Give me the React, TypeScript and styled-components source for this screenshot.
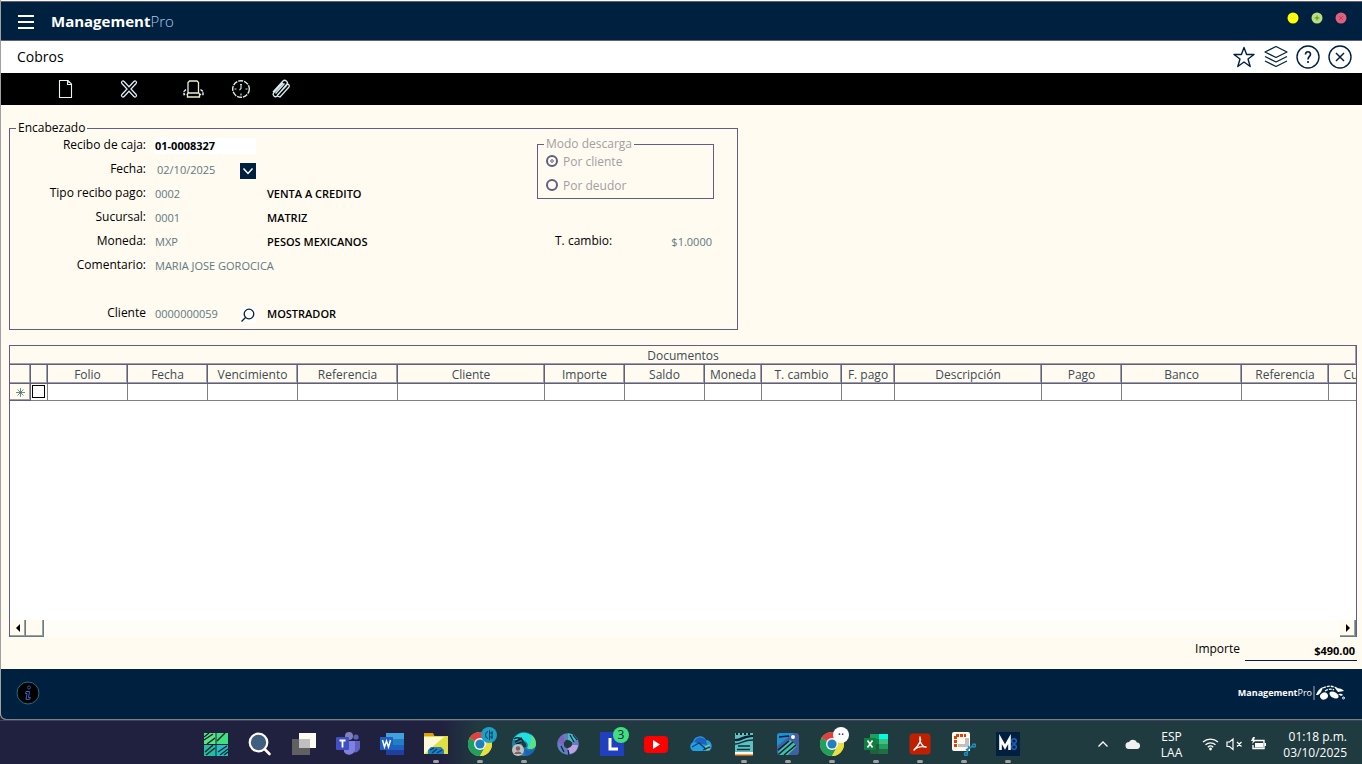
import React from "react";
import styled, { createGlobalStyle, css } from "styled-components";

const navy = "#00203f";
const cream = "#fffbf0";
const line = "#5f5f80";
const sans = '"Open Sans", "Noto Sans", sans-serif';

const Global = createGlobalStyle`
  *, *::before, *::after { box-sizing: border-box; }
  body { margin: 0; background: #20203f; font-family: ${sans}; font-size: 12px; color: #000; }
  button, input { font-family: inherit; }
`;

const Screen = styled.div`
  min-height: 100vh;
  display: flex;
  flex-direction: column;
`;

const AppWindow = styled.div`
  flex: 1;
  display: flex;
  flex-direction: column;
  border-left: 1px solid #a0a0a4;
  border-bottom: 1px solid #808080;
  border-bottom-left-radius: 6px;
  background: ${cream};
  overflow: hidden;
`;

const AppBar = styled.header`
  height: 40px;
  margin-top: 1px;
  display: flex;
  align-items: center;
  padding: 0 15px 0 17px;
  background: ${navy};
  border-top: 1px solid ${line};
  border-bottom: 1px solid ${line};
`;

const IconButton = styled.button<{ $w?: number; $h?: number; $bg?: string }>`
  width: ${(p) => p.$w ?? 24}px;
  height: ${(p) => p.$h ?? 24}px;
  padding: 0;
  border: 0;
  background: ${(p) => p.$bg ?? "transparent"};
  display: flex;
  align-items: center;
  justify-content: center;
  flex: none;
`;

const Brand = styled.div<{ $small?: boolean }>`
  color: #fff;
  font-weight: 700;
  ${(p) => (p.$small ? css`font-size: 9px; line-height: 14px;` : css`font-size: 15px; line-height: 20px; margin-left: 17px;`)}
  span { font-weight: ${(p) => (p.$small ? 400 : 300)}; color: ${(p) => (p.$small ? "#fff" : "#a6caf0")}; }
`;

const WindowButtons = styled.div`
  margin-left: auto;
  display: flex;
  gap: 12px;
  padding-bottom: 6px;
`;

const TitleBar = styled.div`
  height: 32px;
  display: flex;
  align-items: center;
  justify-content: space-between;
  padding: 0 10px 0 16px;
  background: #fff;
`;

const Title = styled.h1`
  margin: 0;
  font-size: 14px;
  line-height: 20px;
  font-weight: 400;
`;

const TitleActions = styled.div`
  display: flex;
  gap: 8px;
`;

const Toolbar = styled.div`
  height: 32px;
  display: flex;
  align-items: center;
  padding-left: 52px;
  background: #000;
`;

const ToolGroup = styled.div<{ $gap: number; $after?: number }>`
  display: flex;
  gap: ${(p) => p.$gap}px;
  margin-right: ${(p) => p.$after ?? 0}px;
`;

const Main = styled.main`
  flex: 1;
  display: flex;
  flex-direction: column;
  padding: 17px 5px 8px 8px;
`;

const HeaderBox = styled.fieldset`
  width: 729px;
  max-width: 100%;
  margin: 0 0 15px;
  padding: 0 0 3px;
  border: 1px solid ${line};
  display: grid;
  grid-template-columns: 527px 177px;
`;

const Legend = styled.legend<{ $muted?: boolean }>`
  margin-left: ${(p) => (p.$muted ? -2 : 6)}px;
  padding: 0 2px;
  line-height: 12px;
  color: ${(p) => (p.$muted ? "#a0a0a4" : "#000")};
`;

const Fields = styled.div`
  display: flex;
  flex-direction: column;
`;

const Row = styled.div<{ $spaced?: boolean }>`
  height: 24px;
  display: grid;
  grid-template-columns: 136px 102px auto;
  align-items: center;
  margin-top: ${(p) => (p.$spaced ? 24 : 0)}px;
`;

const Label = styled.label`
  text-align: right;
  line-height: 20px;
  padding-bottom: 2px;
  white-space: nowrap;
`;

const ValueCell = styled.div`
  margin-left: 8px;
  width: 102px;
  display: flex;
  align-items: center;
  button { margin-top: 2px; }
`;

const Value = styled.input<{ $tone?: "white" | "date" | "plain"; $wide?: boolean }>`
  height: 16px;
  flex: none;
  width: ${(p) => (p.$tone === "white" ? 102 : p.$wide ? 240 : 86)}px;
  padding: 0 0 0 ${(p) => (p.$tone === "date" ? 3 : 1)}px;
  border: 0;
  font-size: 11px;
  line-height: 16px;
  font-weight: ${(p) => (p.$tone === "white" ? 700 : p.$tone === "date" ? 400 : 500)};
  color: ${(p) => (p.$tone === "white" ? "#000" : "#607880")};
  background: ${(p) => (p.$tone === "white" ? "#fff" : "transparent")};
`;

const Description = styled.output`
  margin-left: 19px;
  font-size: 11px;
  line-height: 16px;
  font-weight: 600;
  white-space: nowrap;
`;

const Side = styled.div`
  padding-top: 4px;
`;

const ModeBox = styled.fieldset`
  margin: 0;
  padding: 0 0 0 8px;
  border: 1px solid ${line};
`;

const RadioRow = styled.label`
  height: 24px;
  display: flex;
  align-items: center;
  gap: 5px;
  padding-bottom: 2px;
  color: #a0a0a4;
`;

const Radio = styled.input`
  appearance: none;
  width: 12px;
  height: 12px;
  margin: 0;
  border: 2px solid ${line};
  border-radius: 50%;
  &:checked { background: radial-gradient(circle, #a0a0a4 2px, transparent 2px); }
`;

const RateRow = styled.div`
  height: 24px;
  margin-top: 31px;
  padding-left: 18px;
  display: flex;
  align-items: center;
  justify-content: space-between;
  input { width: 80px; text-align: right; padding-right: 2px; }
`;

const Grid = styled.section`
  flex: 1;
  display: flex;
  flex-direction: column;
  border: 1px solid ${line};
  border-bottom: 0;
  background: #fff;
  overflow: hidden;
`;

const GridTitle = styled.h2`
  margin: 0;
  height: 19px;
  font-size: 12px;
  line-height: 19px;
  font-weight: 400;
  text-align: center;
  color: #404a55;
  background: ${cream};
  border-bottom: 1px solid ${line};
  box-shadow: inset -1px -1px #a0a0a4;
`;

const Table = styled.table`
  table-layout: fixed;
  width: 1389px;
  border-collapse: separate;
  border-spacing: 0;
`;

const Th = styled.th`
  height: 19px;
  padding: 1px 0 0;
  font-weight: 400;
  line-height: 16px;
  color: #404a55;
  white-space: nowrap;
  background: ${cream};
  border-right: 1px solid ${line};
  border-bottom: 1px solid ${line};
  box-shadow: inset -1px -1px #a0a0a4;
`;

const Td = styled.td<{ $head?: boolean }>`
  height: 17px;
  padding: 0;
  line-height: 0;
  border-right: 1px solid #808080;
  border-bottom: 1px solid #808080;
  ${(p) => p.$head && css`background: ${cream}; border-color: ${line}; text-align: center; box-shadow: inset -1px -1px #a0a0a4;`}
`;

const Check = styled.input`
  appearance: none;
  display: block;
  width: 13px;
  height: 13px;
  margin: 0 0 1px 1px;
  border: 1px solid #000;
  background: #fff;
`;

const ScrollBar = styled.div`
  margin-top: auto;
  height: 17px;
  display: flex;
  background: #fffdf8;
`;

const ScrollButton = styled.button<{ $end?: boolean }>`
  width: 16px;
  height: 17px;
  padding: 0;
  margin-left: ${(p) => (p.$end ? "auto" : 0)};
  display: flex;
  align-items: center;
  justify-content: center;
  background: ${cream};
  border: 0;
  border-right: 1px solid #607f80;
  border-bottom: 1px solid #607f80;
  box-shadow: inset -1px -1px #a0a0a4;
  & + &:not(:last-child) { width: 18px; }
`;

const Total = styled.div`
  display: flex;
  justify-content: flex-end;
  height: 24px;
  gap: 5px;
  label { line-height: 23px; }
  input {
    width: 112px;
    height: 24px;
    padding: 3px 2px 0 0;
    border: 0;
    border-bottom: 1px solid ${navy};
    background: transparent;
    text-align: right;
    font-size: 11px;
    font-weight: 700;
  }
`;

const Footer = styled.footer`
  height: 50px;
  display: flex;
  align-items: center;
  justify-content: space-between;
  padding: 0 16px 2px 15px;
  background: ${navy};
`;

const FooterBrand = styled.div`
  display: flex;
  align-items: center;
  gap: 1px;
`;

const Taskbar = styled.nav`
  height: 44px;
  display: flex;
  align-items: center;
  padding: 0 15px 0 194px;
  border-top: 1px solid #404060;
  background: linear-gradient(90deg, #20203f 440px, #203b40 480px);
  color: #fff;
`;

const TaskButton = styled.button<{ $open?: boolean }>`
  position: relative;
  width: 44px;
  height: 43px;
  padding: 3px 0 0;
  border: 0;
  background: none;
  display: flex;
  align-items: center;
  justify-content: center;
  flex: none;
  ${(p) => p.$open && css`
    &::after {
      content: "";
      position: absolute;
      left: 19px;
      bottom: 1px;
      width: 6px;
      height: 3px;
      border-radius: 2px;
      background: #a0a0a4;
    }
  `}
`;

const Badge = styled.span<{ $bg: string }>`
  position: absolute;
  right: 5px;
  top: 6px;
  width: 16px;
  height: 16px;
  border-radius: 50%;
  background: ${(p) => p.$bg};
  color: #00203f;
  font-size: 12px;
  line-height: 16px;
  text-align: center;
`;

const Tray = styled.div`
  margin-left: auto;
  display: flex;
  align-items: center;
`;

const TrayIcons = styled.div`
  display: flex;
  align-items: center;
  gap: 7px;
  margin: 3px 16px 0 20px;
`;

const TrayLead = styled.div`
  display: flex;
  align-items: center;
  gap: 16px;
  margin: 3px 20px 0 0;
`;

const TrayText = styled.div<{ $right?: boolean }>`
  margin-top: 4px;
  font-size: 12px;
  line-height: 16px;
  text-align: ${(p) => (p.$right ? "right" : "center")};
`;

const columns: [string, number][] = [
  ["", 21], ["", 17], ["Folio", 80], ["Fecha", 80], ["Vencimiento", 90], ["Referencia", 100],
  ["Cliente", 147], ["Importe", 80], ["Saldo", 80], ["Moneda", 57], ["T. cambio", 80],
  ["F. pago", 53], ["Descripción", 147], ["Pago", 80], ["Banco", 120], ["Referencia", 87], ["Cuenta", 70],
];

const Svg = ({ s = 24, h, vb, children }: { s?: number; h?: number; vb?: string; children: React.ReactNode }) => (
  <svg width={s} height={h ?? s} viewBox={vb ?? `0 0 ${s} ${h ?? s}`} fill="none" aria-hidden="true">{children}</svg>
);

const Chrome = () => (
  <Svg>
    <circle cx="12" cy="12" r="12" fill="#e8e040" />
    <path d="M12 12 1.6 6A12 12 0 0 1 22.4 6Z" fill="#e04040" />
    <path d="M12 12 1.6 6A12 12 0 0 0 12 24l5-9Z" fill="#209f60" />
    <path d="M12 6h10.4A12 12 0 0 1 12 24l5-9Z" fill="#e8e040" />
    <circle cx="12" cy="12" r="6" fill="#fffbf0" />
    <circle cx="12" cy="12" r="4.6" fill="#2080c0" />
  </Svg>
);

const tasks: { name: string; open?: boolean; badge?: [string, React.ReactNode]; icon: React.ReactNode }[] = [
  { name: "Inicio", icon: <Svg><path d="M0 1h11.500v11H0z" fill="#60e080" /><path d="M12.500 1H24v11H12.500z" fill="#40e080" /><path d="M0 13h11.500v11H0z" fill="#20bfa0" /><path d="M12.500 13H24v11H12.500z" fill="#20bfc0" /><path d="M0 5 5 1M0 8 9 2M3 12l8-6M13 9l8-8M14 20l9-6M16 23l8-6M1 20l8-7M2 23l9-7M20 23l4-3" stroke="#00202f" strokeWidth="1.300" /></Svg> },
  { name: "Buscar", icon: <Svg><circle cx="10.500" cy="10.500" r="8.800" fill="#405f80" stroke="#fffbf0" strokeWidth="2.200" /><path d="m17 17.500 4.500 4.500" stroke="#fffbf0" strokeWidth="2.600" strokeLinecap="round" /></Svg> },
  { name: "Vista de tareas", icon: <Svg><path d="M0 7h18v16H0z" fill="#606060" /><path d="M7 1h17v15H7z" fill="#fffbf0" /><path d="M7 7h11v9H7z" fill="#c0c0c0" /></Svg> },
  { name: "Teams", icon: <Svg><circle cx="13" cy="4" r="4" fill="#8080c0" /><circle cx="20" cy="5" r="2.600" fill="#6060c0" /><path d="M16 9h8v7a5 5 0 0 1-7 4Z" fill="#6060c0" /><path d="M8 9h11v8a6 6 0 0 1-11 3Z" fill="#8080e0" /><rect y="5" width="13" height="13" rx="1" fill="#4050c0" /><path d="M3.500 8.500h6M6.500 8.500v7" stroke="#fff" strokeWidth="1.800" /></Svg> },
  { name: "Word", icon: <Svg><path d="M6 1h18v6H6z" fill="#40a0e0" /><path d="M6 7h18v6H6z" fill="#2080c0" /><path d="M6 13h18v5H6z" fill="#2060c0" /><path d="M6 18h18v5H6z" fill="#2040a0" /><rect y="5" width="13" height="13" fill="#2060c0" /><path d="m2.500 8 2 7 2-6 2 6 2-7" stroke="#fff" strokeWidth="1.500" /></Svg> },
  { name: "Explorador", open: true, icon: <Svg><path d="M0 1h9l2 4H0z" fill="#e0a000" /><path d="M0 4h24v18H0z" fill="#e0e040" /><path d="M0 5h20L0 22Z" fill="#fff8d8" /><path d="M4 22v-4l3-3h10l3 3v4z" fill="#2080c0" /><path d="m6 18 4-2M8 21l5-4M13 21l5-3" stroke="#003f60" strokeWidth="1.300" /></Svg> },
  { name: "Chrome", open: true, badge: ["#20a0c0", <Svg s={16} key="b"><path d="M7 4.500Q4.500 5 4.500 8t2.500 3.500M8.500 3v10M11 4v8M8 6h4M8 10h4" stroke="#00406f" /></Svg>], icon: <Chrome /> },
  { name: "Edge", open: true, icon: <Svg><circle cx="12" cy="12" r="12" fill="#2080a0" /><path d="M1 8a12 12 0 0 1 23 4c0 5-6 6-9 4 3-4-2-9-8-8Z" fill="#20e0e0" /><path d="M19 2.500a12 12 0 0 1 5 9.500c0 4-5 6-9 4 3-1 5-6 4-13.500Z" fill="#60e080" /><path d="M2 7c4-3 9 0 9 3l-7 2M3 10l7-4" stroke="#00202f" strokeWidth="1.500" /><path d="M9 10c4-1 6 2 5 5l-3 1z" fill="#203b40" /><path d="M11 16c3 3 8 3 12 1a12 12 0 0 1-9 7Z" fill="#2060c0" /><circle cx="6" cy="18" r="6" fill="#c0c0c0" /><circle cx="6" cy="16.500" r="2.200" fill="#806060" /><path d="M2 22a4.500 4.500 0 0 1 8 0" fill="#806060" /></Svg> },
  { name: "Copilot", icon: <Svg><circle cx="12" cy="12" r="7.500" stroke="#6080c0" strokeWidth="6.500" /><path d="M12 1.500a10.500 10.500 0 0 1 9 6l-6 2.500-3-2z" fill="#40c0c0" /><path d="M22 13a10.500 10.500 0 0 1-8 9l-2-6 4-3z" fill="#c0a0e0" /><path d="M2 10a10.500 10.500 0 0 1 5-7l2 6-2 4z" fill="#8060c0" /><path d="m14 3 4 7M17 3l4 5M5 14l3 6M12 18l1 5" stroke="#102040" strokeWidth="1.200" /><circle cx="12" cy="12" r="3.800" fill="#203b40" /></Svg> },
  { name: "L", badge: ["#40e080", "3"], icon: <Svg><path d="M0 0h24v24H0z" fill="#2040c0" /><path d="M10 6v11h8" stroke="#fff" strokeWidth="3" /></Svg> },
  { name: "YouTube", icon: <Svg><rect y="4" width="24" height="17" rx="4" fill="#f00" /><path d="m9 8 7 4.500L9 17z" fill="#fff" /></Svg> },
  { name: "OneDrive", icon: <Svg><path d="M5 19a5 5 0 0 1 0-9 7 7 0 0 1 13-2 6 6 0 0 1 3 11Z" fill="#20a0e0" /><path d="M6 10a7 7 0 0 1 12-2l1 5-6-1z" fill="#2060c0" /><path d="m4 15 7-4 8 7M15 18l7-3" stroke="#003f60" strokeWidth="1.200" /><path d="m17 15 5-2M18 18l4-1" stroke="#e0c040" /></Svg> },
  { name: "Bloc de notas", open: true, icon: <Svg><path d="M3 1h18v20H3z" fill="#60c0c0" /><path d="M3 20h18v3H3z" fill="#fffbf0" /><path d="M3 22.500h18V24H3z" fill="#c06000" /><path d="M3 7c5 0 8-4 18-4v2C13 5 9 10 3 9Z" fill="#00202f" /><path d="M3 12c6 0 8-4 18-4M6 14h12M5 17.500h13" stroke="#00303f" strokeWidth="1.500" /><path d="M5 1v2M9 1v2M13 1v2M17 1v2" stroke="#00202f" strokeWidth="2" /></Svg> },
  { name: "Fotos", open: true, icon: <Svg><rect x="1" y="1" width="22" height="22" rx="3" fill="#4060a0" /><path d="M1 4q0-3 3-3h14L1 14z" fill="#2090d0" /><path d="M2 20 14 8l7 6-9 9H4z" fill="#40c0a0" /><path d="m2 18 11-9M3 22l14-12M8 23l12-10M3 5l10-1" stroke="#00203f" strokeWidth="1.600" /><circle cx="17" cy="5" r="2" fill="#fff" /></Svg> },
  { name: "Chrome 2", open: true, badge: ["#fff", "··"], icon: <Chrome /> },
  { name: "Excel", open: true, icon: <Svg><path d="M6 2h9v5H6z" fill="#20a060" /><path d="M15 2h9v5h-9z" fill="#00ffe0" /><path d="M6 7h9v5H6z" fill="#108050" /><path d="M15 7h9v5h-9z" fill="#40c080" /><path d="M6 12h9v10H6z" fill="#205f40" /><path d="M15 12h9v5h-9z" fill="#209f60" /><path d="M15 17h9v5h-9z" fill="#206f40" /><path d="M0 6h12v12H0z" fill="#108040" /><path d="m3.500 8.500 5 7M8.500 8.500l-5 7" stroke="#fff" strokeWidth="1.700" /></Svg> },
  { name: "Acrobat", open: true, icon: <Svg><rect x="1.500" y="1.500" width="21" height="21" rx="3.500" fill="#c02000" /><path d="M12 5c2 4-2 9-6 13 3-3 7-4 12-3-4 0-7-6-6-10Z" stroke="#fff" strokeWidth="1.400" strokeLinejoin="round" /></Svg> },
  { name: "Recortes", open: true, icon: <Svg><path d="M2 0h14q2 0 2 2v17H2q-2 0-2-2V2q0-2 2-2" fill="#fffbf0" /><path d="M3.500 15V3.500H14" stroke="#e04000" strokeWidth="3" strokeDasharray="3 1" /><path d="M6 12h7V6h4v9H6z" fill="#c0c0c0" /><path d="m14 18 7-4M17 14l-2 7" stroke="#208fc0" strokeWidth="1.500" /><circle cx="22" cy="13.500" r="1.500" stroke="#208fc0" strokeWidth="1.500" /><circle cx="14" cy="22" r="1.500" stroke="#208fc0" strokeWidth="1.500" /></Svg> },
  { name: "ManagementPro", open: true, icon: <Svg><path d="M0 0h24v24H0z" fill={navy} /><path d="M4.500 18V7L9 15l4.500-8v11" stroke="#fff" strokeWidth="2.600" /><circle cx="18" cy="9" r="2.300" stroke="#2060c0" strokeWidth="1.500" /><circle cx="18" cy="15" r="2.300" stroke="#2060c0" strokeWidth="1.500" /></Svg> },
];

const Field = ({ id, label, children, text, spaced }: { id: string; label: string; children: React.ReactNode; text?: string; spaced?: boolean }) => (
  <Row $spaced={spaced}>
    <Label htmlFor={id}>{label}</Label>
    <ValueCell>{children}</ValueCell>
    {text && <Description htmlFor={id}>{text}</Description>}
  </Row>
);

export default function App() {
  return (
    <Screen>
      <Global />
      <AppWindow>
        <AppBar>
          <IconButton $w={16} aria-label="Menú"><Svg s={16}><path d="M0 3h16M0 9h16M0 15h16" stroke="#fff" strokeWidth="2" /></Svg></IconButton>
          <Brand>Management<span>Pro</span></Brand>
          <WindowButtons>
            <IconButton $w={12} $h={12} aria-label="Minimizar"><Svg s={12}><circle cx="6" cy="6" r="5.500" fill="#ff0" /><path d="M3.500 6h5" stroke="#e0e080" /></Svg></IconButton>
            <IconButton $w={12} $h={12} aria-label="Maximizar"><Svg s={12}><circle cx="6" cy="6" r="5.500" fill="#c0dc80" /><path d="M3.500 6h5M6 3.500v5" stroke="#409f20" /></Svg></IconButton>
            <IconButton $w={12} $h={12} aria-label="Cerrar"><Svg s={12}><circle cx="6" cy="6" r="5.500" fill="#e06080" /><path d="m4 4 4 4M8 4 4 8" stroke="#c04060" /></Svg></IconButton>
          </WindowButtons>
        </AppBar>
        <TitleBar>
          <Title>Cobros</Title>
          <TitleActions>
            <IconButton aria-label="Favorito"><Svg><path d="m12 2.500 2.600 7h7.400l-6 4.500 2.200 7.500L12 17l-6.200 4.500L8 14 2 9.500h7.400Z" stroke={navy} strokeWidth="1.400" strokeLinejoin="round" /></Svg></IconButton>
            <IconButton aria-label="Ventanas"><Svg><path d="M12 1.500 23 7l-11 5.500L1 7ZM1 11.500l11 5.500 11-5.500M1 16l11 5.500L23 16" stroke={navy} strokeWidth="1.200" strokeLinejoin="round" /></Svg></IconButton>
            <IconButton aria-label="Ayuda"><Svg><circle cx="12" cy="12" r="11" stroke={navy} strokeWidth="1.400" /><path d="M9.500 9.500c0-3.600 5-3.600 5 0 0 2-2.500 2-2.500 5M12 16v2" stroke={navy} strokeWidth="1.600" /></Svg></IconButton>
            <IconButton aria-label="Cerrar ventana"><Svg><circle cx="12" cy="12" r="11" stroke={navy} strokeWidth="1.400" /><path d="m8 8 8 8M16 8l-8 8" stroke={navy} strokeWidth="1.500" /></Svg></IconButton>
          </TitleActions>
        </TitleBar>
        <Toolbar>
          <ToolGroup $gap={40} $after={24}>
            <IconButton aria-label="Nuevo"><Svg><path d="M6.500 3.500H15l3.500 3.500v13.500h-12ZM14.500 4v4M14.500 4.500l3 1.500M14.500 7.500h4" stroke="#e8f4f0" strokeWidth="1.100" /></Svg></IconButton>
            <IconButton aria-label="Cancelar"><Svg><path d="m6 5.500 12 13M18 5.500l-12 13" stroke="#e0f0ff" strokeWidth="4.200" strokeLinecap="round" /><path d="m6 5.500 12 13M18 5.500l-12 13" stroke="#000" strokeWidth="1.800" strokeLinecap="round" /></Svg></IconButton>
            <IconButton aria-label="Imprimir"><Svg><path d="M7 15.500V5.500L8.500 4h7.500l1.500 1.500v10M7 15.500l-.500 1.500v3h12v-3l-1-1.500M7 16h10.500" stroke="#e8f0d0" strokeWidth="1.300" /><path d="M5 12.500 3 14.500v3h2.500M19.500 12.500l2.500 2v3h-3" stroke="#e0f0ff" strokeWidth="1.400" strokeDasharray="3 1" /></Svg></IconButton>
          </ToolGroup>
          <ToolGroup $gap={16}>
            <IconButton aria-label="Historial"><Svg><circle cx="12" cy="12" r="8.300" stroke="#e0f0e8" strokeWidth="1.400" strokeDasharray="5 1" /><path d="M12 7v4.500l-1.500 1.500M11 7.500h2M12 16.500v2M5.500 12h2M16.500 12h2" stroke="#c0e0e0" strokeWidth="1.200" /></Svg></IconButton>
            <IconButton aria-label="Adjuntar"><Svg><path d="m4 15 10-11c2-2 5.500 1 4 3L8 19c-2 2-5-1-3.500-3L14 6M8 19l3 1 9-10c1-1.500-.500-3-2-3M6.500 16.500l9-10M8.500 18 18 8" stroke="#d8ecf0" strokeWidth="1.300" /></Svg></IconButton>
          </ToolGroup>
        </Toolbar>
        <Main>
          <HeaderBox>
            <Legend>Encabezado</Legend>
            <Fields>
              <Field id="recibo" label="Recibo de caja:"><Value id="recibo" $tone="white" defaultValue="01-0008327" /></Field>
              <Field id="fecha" label="Fecha:">
                <Value id="fecha" $tone="date" defaultValue="02/10/2025" />
                <IconButton $w={16} $h={16} $bg={navy} aria-label="Elegir fecha"><Svg s={16}><path d="m3.500 5.500 4.500 5 4.500-5" stroke="#fff" strokeWidth="1.500" /></Svg></IconButton>
              </Field>
              <Field id="tipo" label="Tipo recibo pago:" text="VENTA A CREDITO"><Value id="tipo" defaultValue="0002" /></Field>
              <Field id="sucursal" label="Sucursal:" text="MATRIZ"><Value id="sucursal" defaultValue="0001" /></Field>
              <Field id="moneda" label="Moneda:" text="PESOS MEXICANOS"><Value id="moneda" defaultValue="MXP" /></Field>
              <Field id="comentario" label="Comentario:"><Value id="comentario" $wide defaultValue="MARIA JOSE GOROCICA" /></Field>
              <Field id="cliente" label="Cliente" text="MOSTRADOR" spaced>
                <Value id="cliente" defaultValue="0000000059" />
                <IconButton $w={16} $h={16} $bg="#fff" aria-label="Buscar cliente"><Svg s={16}><circle cx="9" cy="7" r="4.800" stroke={navy} strokeWidth="1.300" /><path d="m5.500 10.500-4 4" stroke={navy} strokeWidth="1.300" /></Svg></IconButton>
              </Field>
            </Fields>
            <Side>
              <ModeBox>
                <Legend $muted>Modo descarga</Legend>
                <RadioRow><Radio type="radio" name="modo" defaultChecked disabled />Por cliente</RadioRow>
                <RadioRow><Radio type="radio" name="modo" disabled />Por deudor</RadioRow>
              </ModeBox>
              <RateRow><Label htmlFor="cambio">T. cambio:</Label><Value id="cambio" defaultValue="$1.0000" /></RateRow>
            </Side>
          </HeaderBox>
          <Grid>
            <GridTitle>Documentos</GridTitle>
            <Table>
              <colgroup>{columns.map(([, w], i) => <col key={i} width={w} />)}</colgroup>
              <thead><tr>{columns.map(([name], i) => <Th key={i}>{name}</Th>)}</tr></thead>
              <tbody>
                <tr>
                  {columns.map((_, i) => (
                    <Td key={i} $head={i === 0}>
                      {i === 0 && <Svg s={11}><path d="M5.500 1v9M1 5.500h9M2.500 2.500l6 6M8.500 2.500l-6 6" stroke="#407070" strokeWidth=".8" /></Svg>}
                      {i === 1 && <Check type="checkbox" aria-label="Seleccionar documento" />}
                    </Td>
                  ))}
                </tr>
              </tbody>
            </Table>
            <ScrollBar>
              <ScrollButton aria-label="Desplazar a la izquierda"><Svg s={8}><path d="M6 0v8L2 4z" fill="#000" /></Svg></ScrollButton>
              <ScrollButton aria-label="Barra de desplazamiento" />
              <ScrollButton $end aria-label="Desplazar a la derecha"><Svg s={8}><path d="M2 0v8l4-4z" fill="#000" /></Svg></ScrollButton>
            </ScrollBar>
          </Grid>
          <Total><label htmlFor="total">Importe</label><input id="total" defaultValue="$490.00" /></Total>
        </Main>
        <Footer>
          <IconButton aria-label="Información"><Svg><circle cx="12" cy="12" r="11" fill="#000" stroke="#20707f" /><circle cx="13" cy="6.500" r="1.500" stroke="#2060a0" /><path d="M10 10.500h3.500l-1 6h2l-1 2h-3.500l1-6H9.500Z" stroke="#4060c0" /></Svg></IconButton>
          <FooterBrand>
            <Brand $small>Management<span>Pro</span></Brand>
            <Svg s={33} h={16}><path d="M1 1v14" stroke="#a0b0c0" /><path d="M3 10q2-6 7-8-1 5-5 8Z" fill="#fff" /><ellipse cx="11" cy="11" rx="4" ry="3.500" fill="#fff" transform="rotate(-30 11 11)" /><ellipse cx="21" cy="10" rx="5" ry="3" fill="#fff" transform="rotate(30 21 10)" /><path d="M10 3q8-4 15 1M12 6q5-3 9-1" stroke="#fff" strokeWidth="1.300" strokeDasharray="3 1" /><path d="M22 3q7 0 9 3l-6 1Z" fill="#fff" /><path d="M25 9q4-1 5 1l-2 1Z" fill="#fff" /><circle cx="30.500" cy="13" r="1" stroke="#fff" /></Svg>
          </FooterBrand>
        </Footer>
      </AppWindow>
      <Taskbar>
        {tasks.map((t) => (
          <TaskButton key={t.name} $open={t.open} aria-label={t.name}>
            {t.icon}
            {t.badge && <Badge $bg={t.badge[0]}>{t.badge[1]}</Badge>}
          </TaskButton>
        ))}
        <Tray>
          <TrayLead>
            <Svg s={12}><path d="m1.500 8.500 4.500-4.500 4.500 4.500" stroke="#fff" strokeWidth="1.300" /></Svg>
            <Svg s={16}><path d="M4 13a3.500 3.500 0 0 1 0-7 4.500 4.500 0 0 1 8 .500A3.300 3.300 0 0 1 12.500 13Z" fill="#f0f0f0" /></Svg>
          </TrayLead>
          <TrayText>ESP<br />LAA</TrayText>
          <TrayIcons>
            <Svg s={17} h={16}><path d="M1 6a11 11 0 0 1 15 0M3.500 8.700a7.500 7.500 0 0 1 10 0M5.800 11.200a4 4 0 0 1 5.400 0" stroke="#fff" strokeWidth="1.200" /><circle cx="8.500" cy="13" r="1.400" fill="#fff" /></Svg>
            <Svg s={17} h={16}><path d="M1 6h2.500L7 3v10.500L3.500 10.500H1ZM11 6l4.500 4.500M15.500 6 11 10.500" stroke="#fff" strokeWidth="1.200" /></Svg>
            <Svg s={17} h={16}><path d="M4 4.500h10v8H3V9" stroke="#fff" strokeWidth="1.400" /><path d="M5 7h8v4.500H5zM14.500 7H16v3h-1.500z" fill="#fff" /><path d="M3 1 1 5h2l-1 3 4-4H4l1-3Z" fill="#fff" /></Svg>
          </TrayIcons>
          <TrayText $right>01:18 p.m.<br />03/10/2025</TrayText>
        </Tray>
      </Taskbar>
    </Screen>
  );
}
